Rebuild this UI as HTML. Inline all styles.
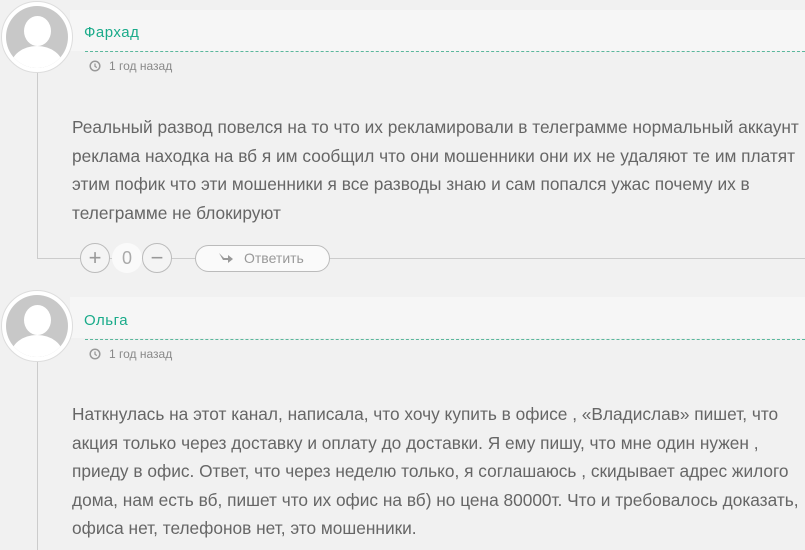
<!DOCTYPE html>
<html><head><meta charset="utf-8"><style>
*{margin:0;padding:0;box-sizing:border-box}
body{width:805px;height:542px;overflow:hidden;background:#f1f1f1;font-family:"Liberation Sans","DejaVu Sans",sans-serif;position:relative}
.abs{position:absolute}
.band{left:70px;right:0;height:41px;background:#f6f6f6}
.av{width:72px;height:72px;border-radius:50%;background:#fff;border:1px solid #ddd}
.av .in{position:absolute;left:4px;top:4px;width:62px;height:62px;border-radius:50%;background:#c8c8c8;overflow:hidden}
.head{position:absolute;left:18px;top:10px;width:27px;height:30px;border-radius:50%;background:#fff}
.body{position:absolute;left:5px;top:40px;width:52px;height:40px;border-radius:50% 50% 0 0;background:#fff}
.name{color:#1aab8a;font-size:15px;letter-spacing:.5px}
.dash{left:85px;right:0;border-top:1px dashed #5bb79c}
.time{color:#888;font-size:12px}
.txt{left:72px;color:#666;font-size:17.3px;line-height:28.5px;white-space:nowrap}
.vl{border-left:1px solid #ccc;width:0}
.hl{border-top:1px solid #ccc;height:0}
.cb{width:30px;height:30px;border-radius:50%;border:1px solid #bbb;background:#f4f4f4;color:#999;font-size:22px;line-height:27px;text-align:center}
</style></head><body>

<div class="abs band" style="top:10px"></div>
<div class="abs vl" style="left:37px;top:70px;height:188px"></div>
<div class="abs hl" style="left:37px;top:258px;width:768px"></div>
<div class="abs av" style="left:1px;top:1px"><div class="in"><div class="head"></div><div class="body"></div></div></div>
<div class="abs name" style="left:84px;top:24px">Фархад</div>
<div class="abs dash" style="top:51px"></div>
<svg class="abs" style="left:89px;top:60px" width="12" height="12" viewBox="0 0 12 12"><circle cx="6" cy="6" r="4.8" fill="none" stroke="#999" stroke-width="1.5"/><path d="M6 3.5V6.3L7.8 7.6" fill="none" stroke="#999" stroke-width="1.3"/></svg>
<div class="abs time" style="left:109px;top:59px">1 год назад</div>
<div class="abs txt" style="top:113px">Реальный развод повелся на то что их рекламировали в телеграмме нормальный аккаунт<br>реклама находка на вб я им сообщил что они мошенники они их не удаляют те им платят<br>этим пофик что эти мошенники я все разводы знаю и сам попался ужас почему их в<br>телеграмме не блокируют</div>

<div class="abs cb" style="left:80px;top:243px">+</div>
<div class="abs" style="left:112px;top:243px;width:30px;height:30px;border-radius:50%;background:#fafafa;color:#aaa;font-size:18px;line-height:30px;text-align:center">0</div>
<div class="abs cb" style="left:142px;top:243px">−</div>
<div class="abs" style="left:195px;top:245px;width:135px;height:27px;border-radius:14px;border:1px solid #bbb;background:#fafafa;color:#999;font-size:14px;line-height:25px;padding-left:48px">Ответить</div>
<svg class="abs" style="left:218px;top:251px" width="16" height="14" viewBox="0 0 16 14"><path d="M1 2 L6 7 L10 7 L10 4 L15 8 L10 12 L10 9 L5 9 Z" fill="#999"/></svg>

<div class="abs band" style="top:297px"></div>
<div class="abs vl" style="left:37px;top:360px;height:190px"></div>
<div class="abs av" style="left:1px;top:290px"><div class="in"><div class="head"></div><div class="body"></div></div></div>
<div class="abs name" style="left:84px;top:312px">Ольга</div>
<div class="abs dash" style="top:339px"></div>
<svg class="abs" style="left:89px;top:348px" width="12" height="12" viewBox="0 0 12 12"><circle cx="6" cy="6" r="4.8" fill="none" stroke="#999" stroke-width="1.5"/><path d="M6 3.5V6.3L7.8 7.6" fill="none" stroke="#999" stroke-width="1.3"/></svg>
<div class="abs time" style="left:109px;top:347px">1 год назад</div>
<div class="abs txt" style="top:400px">Наткнулась на этот канал, написала, что хочу купить в офисе , «Владислав» пишет, что<br>акция только через доставку и оплату до доставки. Я ему пишу, что мне один нужен ,<br>приеду в офис. Ответ, что через неделю только, я соглашаюсь , скидывает адрес жилого<br>дома, нам есть вб, пишет что их офис на вб) но цена 80000т. Что и требовалось доказать,<br>офиса нет, телефонов нет, это мошенники.</div>
</body></html>
